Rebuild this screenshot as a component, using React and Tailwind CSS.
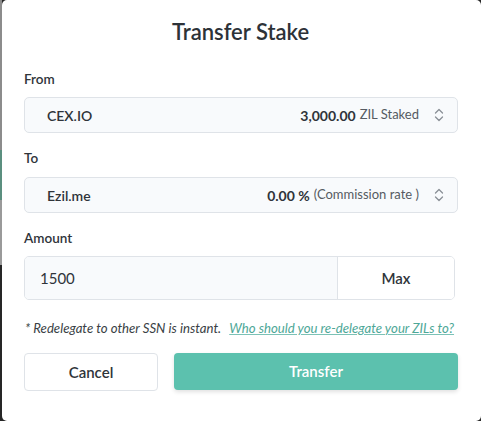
import React from "react";

function Chevrons() {
  return (
    <svg width="12" height="16" viewBox="0 0 12 16" fill="none" stroke="#8a8f96" strokeWidth="1.3" strokeLinecap="round" strokeLinejoin="round">
      <path d="M2.5 6 L6 2.5 L9.5 6" />
      <path d="M2.5 10 L6 13.5 L9.5 10" />
    </svg>
  );
}

function Select({ name, value, unit }) {
  return (
    <div className="flex items-center h-[36px] w-[434px] rounded-[5px] border border-[#dfe3e8] bg-[#f8fafc] pl-[22px] pr-[12px]">
      <span className="text-[14px] font-semibold text-[#2f343a]">{name}</span>
      <span className="ml-auto text-[14px] font-bold text-[#2f343a]">{value}</span>
      <span className="ml-[4px] text-[13px] text-[#555b62]">{unit}</span>
      <span className="ml-[14px] flex items-center"><Chevrons /></span>
    </div>
  );
}

export default function App() {
  return (
    <div className="flex w-[481px] h-[421px] bg-[#262626]" style={{ fontFamily: "Lato, 'Open Sans', sans-serif" }}>
      <div className="flex flex-col w-[2px] h-full">
        <div className="h-[150px] bg-[#8c8c8c]" />
        <div className="h-[50px] bg-[#5b8f7f]" />
        <div className="h-[65px] bg-[#9a9a9a]" />
        <div className="flex-1 bg-[#262626]" />
      </div>
      <div className="flex-1 bg-white rounded-[5px] flex flex-col pl-[22px] pt-[17px]">
        <h1 className="text-center pr-[24px] text-[22px] leading-[30px] font-semibold text-[#2d3238]">Transfer Stake</h1>
        <div className="mt-[23px] text-[13.5px] leading-[18px] font-semibold text-[#2f343a]">From</div>
        <div className="mt-[9px]"><Select name="CEX.IO" value="3,000.00" unit="ZIL Staked" /></div>
        <div className="mt-[16px] text-[13.5px] leading-[18px] font-semibold text-[#2f343a]">To</div>
        <div className="mt-[10px]"><Select name="Ezil.me" value="0.00 %" unit="(Commission rate )" /></div>
        <div className="mt-[16px] text-[13.5px] leading-[18px] font-semibold text-[#2f343a]">Amount</div>
        <div className="mt-[9px] flex h-[44px] w-[431px] rounded-[5px] border border-[#dfe3e8] overflow-hidden">
          <div className="flex items-center w-[313px] bg-[#f8fafc] border-r border-[#dfe3e8] pl-[15px] text-[15px] text-[#2f343a]">1500</div>
          <div className="flex-1 flex items-center justify-center bg-white text-[15px] font-semibold text-[#2f343a]">Max</div>
        </div>
        <div className="mt-[19px] flex items-center text-[13.2px] italic text-[#3a3f45] leading-[18px]">
          <span className="ml-[1px]">* Redelegate to other SSN is instant.</span>
          <span className="ml-[8px] text-[#4ea797] underline decoration-[#7cc2b6]">Who should you re-delegate your ZILs to?</span>
        </div>
        <div className="mt-[16px] flex gap-[16px]">
          <button className="h-[38px] w-[134px] rounded-[4px] border border-[#dfe3e8] bg-white text-[15px] font-semibold text-[#2f343a]">Cancel</button>
          <button className="h-[37px] w-[284px] rounded-[4px] bg-[#5cc1ae] text-[15px] font-semibold text-white shadow-[0_2px_4px_rgba(0,0,0,0.12)]">Transfer</button>
        </div>
      </div>
    </div>
  );
}
